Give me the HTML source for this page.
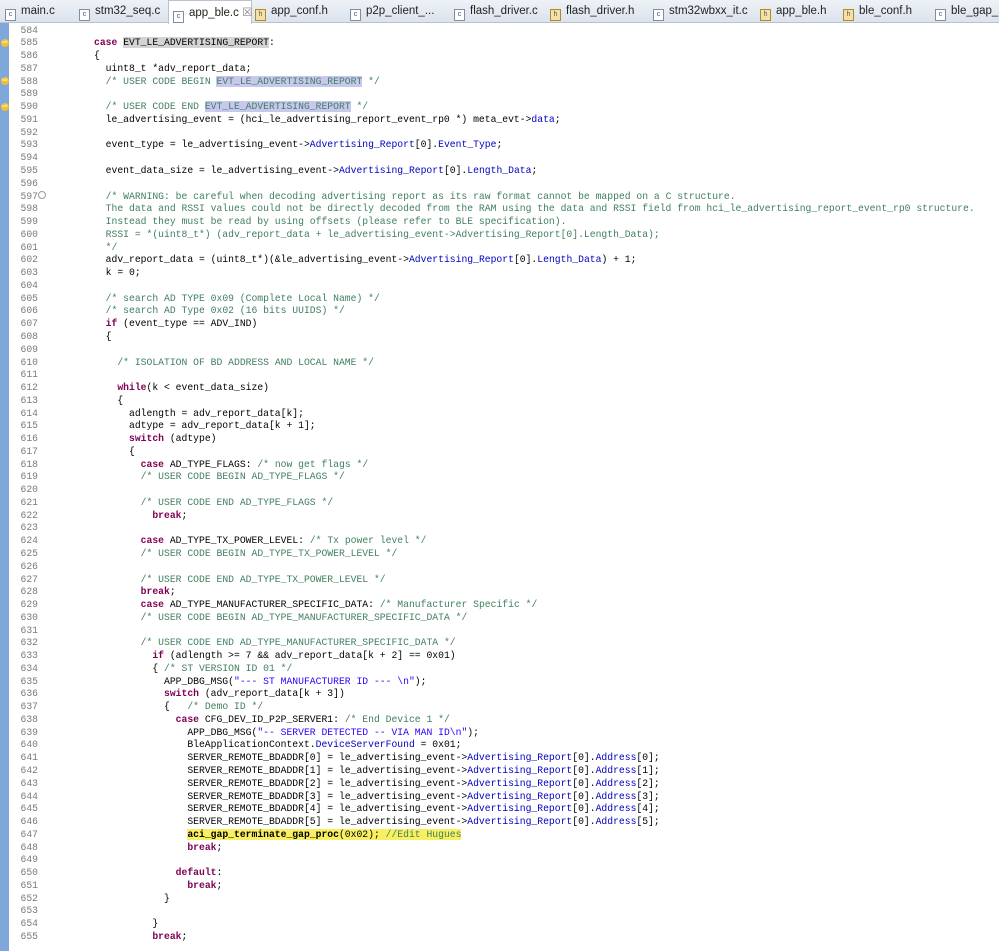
<!DOCTYPE html>
<html><head><meta charset="utf-8"><style>
body{margin:0;width:999px;height:951px;overflow:hidden;background:#fff;font-family:"Liberation Mono",monospace;position:relative}
#tabs{position:absolute;left:0;top:0;width:999px;height:22px;background:linear-gradient(#eef2f7,#dce3ec);border-bottom:1px solid #b9c3d0;font-family:"Liberation Sans",sans-serif;font-size:11.5px;color:#222}
.tab{position:absolute;top:5px;white-space:nowrap}
.tab i{display:inline-block;width:9px;height:10px;border:1px solid #7d8ea6;background:#fff;margin-right:5px;vertical-align:-2px;font-style:normal;font-size:7px;line-height:10px;text-align:center;color:#456}
.tab i.h{border-color:#b08a2a;background:#f3e2a8;color:#654}
#act{position:absolute;left:168px;top:0;width:82px;height:23px;background:#fff;border:1px solid #b9c3d0;border-bottom:none}
#gut{position:absolute;left:0;top:23px;width:9px;height:928px;background:#7fa7da}
#nums{position:absolute;left:12px;top:24.6px;width:26px;text-align:right;font-size:9.7px;line-height:12.76px;color:#7a7a7a;white-space:pre}
#code{position:absolute;left:94px;top:24.6px;font-size:9.73px;line-height:12.76px;color:#000;white-space:pre}
.k{color:#7f0055;font-weight:bold}.c{color:#3f7f5f}.s{color:#2a00ff}.f{color:#0000c0}
.g{background:#d4d4d4}.l{background:#c8c8ee}.y{background:#f8f060}
.ar{position:absolute;left:1px;width:8px;height:8px;border-radius:50%;background:#f0c030;color:#fff;font-size:7px;line-height:8px;text-align:center}
.fold{position:absolute;left:38px;top:191px;width:6px;height:6px;border:1px solid #999;border-radius:50%}
</style></head><body>
<div id="tabs">
<div id="act"></div>
<div class="tab" style="left:5px"><i>c</i>main.c</div>
<div class="tab" style="left:79px"><i>c</i>stm32_seq.c</div>
<div class="tab" style="left:173px"><i>c</i>app_ble.c <span style="color:#888">☒</span></div>
<div class="tab" style="left:255px"><i class="h">h</i>app_conf.h</div>
<div class="tab" style="left:350px"><i>c</i>p2p_client_...</div>
<div class="tab" style="left:454px"><i>c</i>flash_driver.c</div>
<div class="tab" style="left:550px"><i class="h">h</i>flash_driver.h</div>
<div class="tab" style="left:653px"><i>c</i>stm32wbxx_it.c</div>
<div class="tab" style="left:760px"><i class="h">h</i>app_ble.h</div>
<div class="tab" style="left:843px"><i class="h">h</i>ble_conf.h</div>
<div class="tab" style="left:935px"><i>c</i>ble_gap_aci</div>
</div>
<div id="gut"></div>
<div class="ar" style="top:39px">⇨</div>
<div class="ar" style="top:77px">⇨</div>
<div class="ar" style="top:103px">⇨</div>
<div class="fold"></div>
<div id="nums">584
585
586
587
588
589
590
591
592
593
594
595
596
597
598
599
600
601
602
603
604
605
606
607
608
609
610
611
612
613
614
615
616
617
618
619
620
621
622
623
624
625
626
627
628
629
630
631
632
633
634
635
636
637
638
639
640
641
642
643
644
645
646
647
648
649
650
651
652
653
654
655</div>
<div id="code"><br><span class="k">case</span> <span class="g">EVT_LE_ADVERTISING_REPORT</span>:
{
  uint8_t *adv_report_data;
  <span class="c">/* USER CODE BEGIN <span class="l">EVT_LE_ADVERTISING_REPORT</span> */</span>

  <span class="c">/* USER CODE END <span class="l">EVT_LE_ADVERTISING_REPORT</span> */</span>
  le_advertising_event = (hci_le_advertising_report_event_rp0 *) meta_evt-&gt;<span class="f">data</span>;

  event_type = le_advertising_event-&gt;<span class="f">Advertising_Report</span>[0].<span class="f">Event_Type</span>;

  event_data_size = le_advertising_event-&gt;<span class="f">Advertising_Report</span>[0].<span class="f">Length_Data</span>;

  <span class="c">/* WARNING: be careful when decoding advertising report as its raw format cannot be mapped on a C structure.
  The data and RSSI values could not be directly decoded from the RAM using the data and RSSI field from hci_le_advertising_report_event_rp0 structure.
  Instead they must be read by using offsets (please refer to BLE specification).
  RSSI = *(uint8_t*) (adv_report_data + le_advertising_event-&gt;Advertising_Report[0].Length_Data);
  */</span>
  adv_report_data = (uint8_t*)(&amp;le_advertising_event-&gt;<span class="f">Advertising_Report</span>[0].<span class="f">Length_Data</span>) + 1;
  k = 0;

  <span class="c">/* search AD TYPE 0x09 (Complete Local Name) */</span>
  <span class="c">/* search AD Type 0x02 (16 bits UUIDS) */</span>
  <span class="k">if</span> (event_type == ADV_IND)
  {

    <span class="c">/* ISOLATION OF BD ADDRESS AND LOCAL NAME */</span>

    <span class="k">while</span>(k &lt; event_data_size)
    {
      adlength = adv_report_data[k];
      adtype = adv_report_data[k + 1];
      <span class="k">switch</span> (adtype)
      {
        <span class="k">case</span> AD_TYPE_FLAGS: <span class="c">/* now get flags */</span>
        <span class="c">/* USER CODE BEGIN AD_TYPE_FLAGS */</span>

        <span class="c">/* USER CODE END AD_TYPE_FLAGS */</span>
          <span class="k">break</span>;

        <span class="k">case</span> AD_TYPE_TX_POWER_LEVEL: <span class="c">/* Tx power level */</span>
        <span class="c">/* USER CODE BEGIN AD_TYPE_TX_POWER_LEVEL */</span>

        <span class="c">/* USER CODE END AD_TYPE_TX_POWER_LEVEL */</span>
        <span class="k">break</span>;
        <span class="k">case</span> AD_TYPE_MANUFACTURER_SPECIFIC_DATA: <span class="c">/* Manufacturer Specific */</span>
        <span class="c">/* USER CODE BEGIN AD_TYPE_MANUFACTURER_SPECIFIC_DATA */</span>

        <span class="c">/* USER CODE END AD_TYPE_MANUFACTURER_SPECIFIC_DATA */</span>
          <span class="k">if</span> (adlength &gt;= 7 &amp;&amp; adv_report_data[k + 2] == 0x01)
          { <span class="c">/* ST VERSION ID 01 */</span>
            APP_DBG_MSG(<span class="s">"--- ST MANUFACTURER ID --- \n"</span>);
            <span class="k">switch</span> (adv_report_data[k + 3])
            {   <span class="c">/* Demo ID */</span>
              <span class="k">case</span> CFG_DEV_ID_P2P_SERVER1: <span class="c">/* End Device 1 */</span>
                APP_DBG_MSG(<span class="s">"-- SERVER DETECTED -- VIA MAN ID\n"</span>);
                BleApplicationContext.<span class="f">DeviceServerFound</span> = 0x01;
                SERVER_REMOTE_BDADDR[0] = le_advertising_event-&gt;<span class="f">Advertising_Report</span>[0].<span class="f">Address</span>[0];
                SERVER_REMOTE_BDADDR[1] = le_advertising_event-&gt;<span class="f">Advertising_Report</span>[0].<span class="f">Address</span>[1];
                SERVER_REMOTE_BDADDR[2] = le_advertising_event-&gt;<span class="f">Advertising_Report</span>[0].<span class="f">Address</span>[2];
                SERVER_REMOTE_BDADDR[3] = le_advertising_event-&gt;<span class="f">Advertising_Report</span>[0].<span class="f">Address</span>[3];
                SERVER_REMOTE_BDADDR[4] = le_advertising_event-&gt;<span class="f">Advertising_Report</span>[0].<span class="f">Address</span>[4];
                SERVER_REMOTE_BDADDR[5] = le_advertising_event-&gt;<span class="f">Advertising_Report</span>[0].<span class="f">Address</span>[5];
                <span class="y"><b>aci_gap_terminate_gap_proc</b>(0x02); <span class="c">//Edit Hugues</span></span>
                <span class="k">break</span>;

              <span class="k">default</span>:
                <span class="k">break</span>;
            }

          }
          <span class="k">break</span>;</div>
</body></html>
